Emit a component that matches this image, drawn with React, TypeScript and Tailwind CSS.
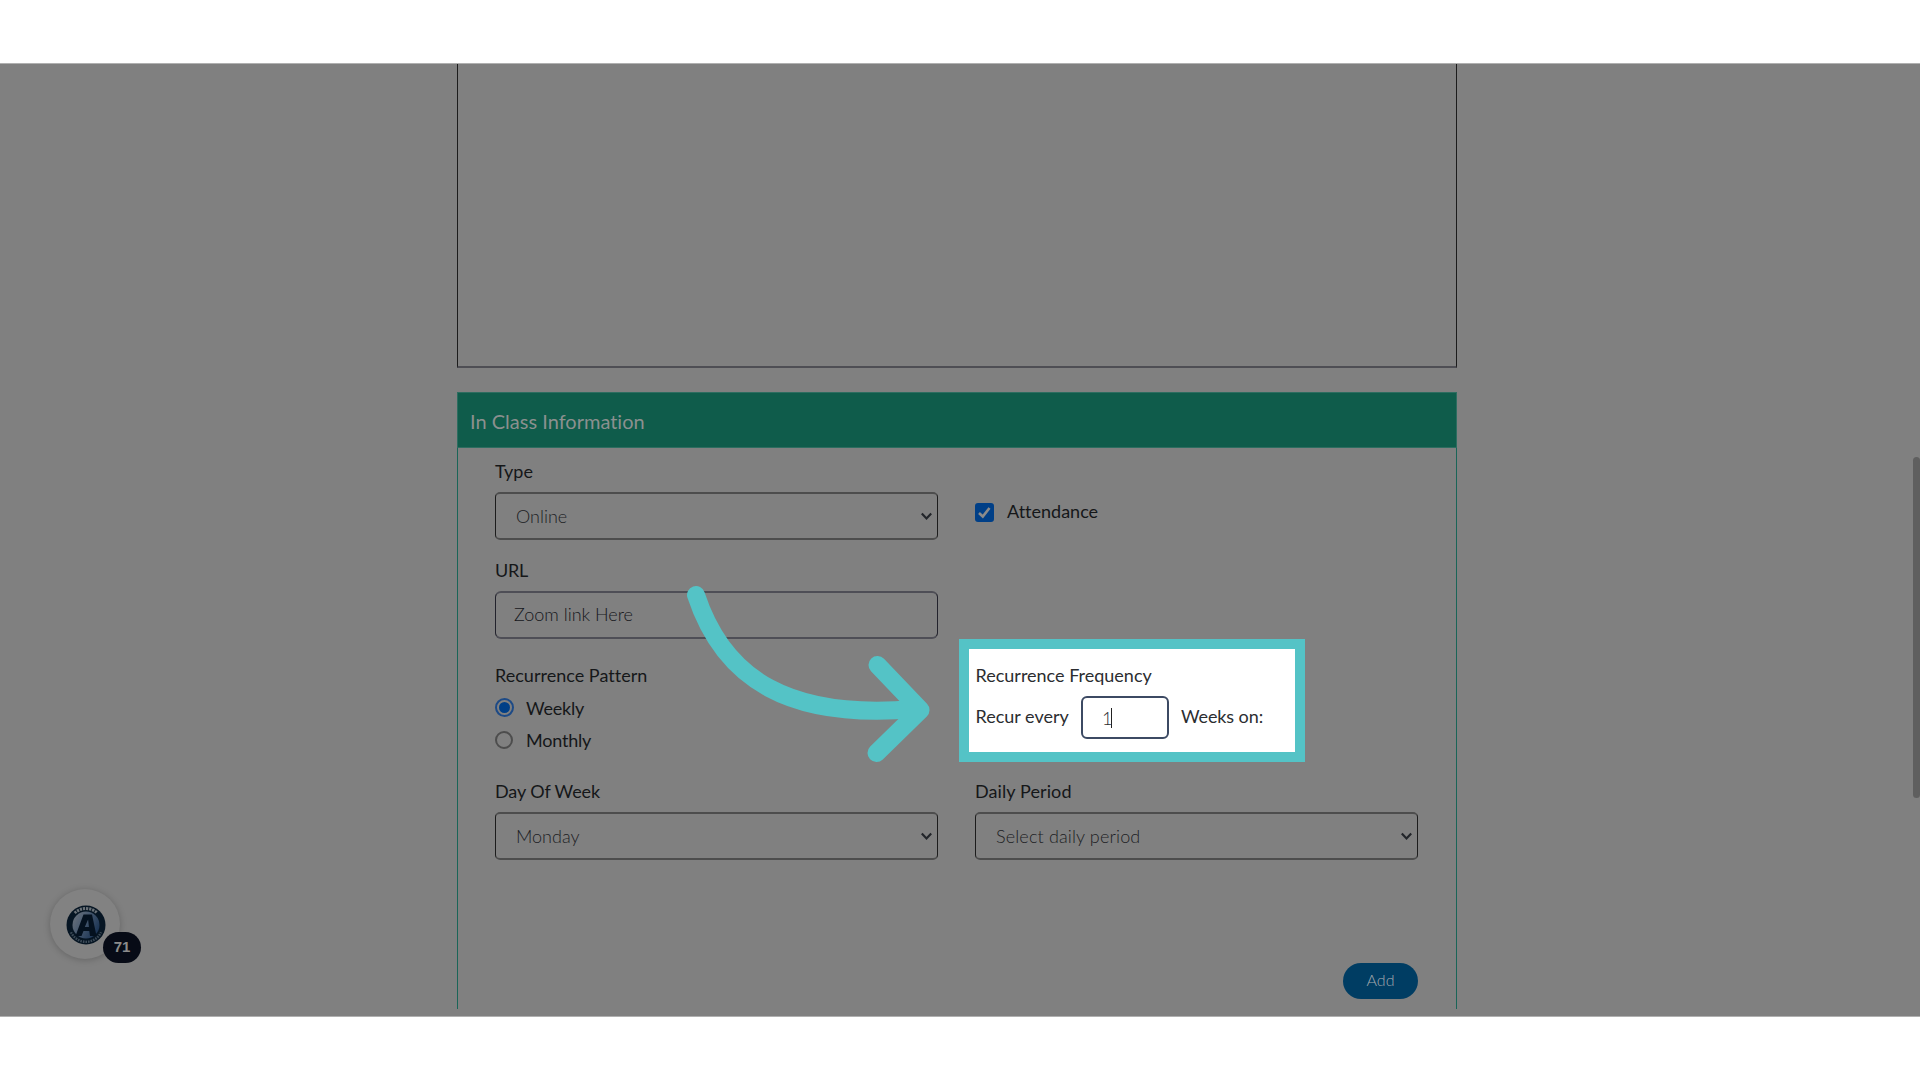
import React from 'react';

interface TextProps {
  children: React.ReactNode;
  className?: string;
}

const Label: React.FC<TextProps> = ({ children, className = '' }) => (
  <div className={`h-6 text-lg leading-6 whitespace-nowrap ${className}`}>{children}</div>
);

interface FieldProps {
  value: string;
  tracking?: string;
}

const SelectBox: React.FC<FieldProps> = ({ value, tracking = '' }) => (
  <div className="mt-[9px] flex h-12 w-[443px] items-center justify-between rounded-[5px] border-x border-y-2 border-x-[#1c1c1c] border-y-[#4d4d4d] pl-5 pr-1">
    <span className={`text-lg font-light leading-6 text-[#1d2024] whitespace-nowrap ${tracking}`}>{value}</span>
    <svg width="13" height="9" viewBox="0 0 13 9" fill="none" className="mt-px">
      <path d="M1.800 1.600 6.500 6.400 11.200 1.600" stroke="#22252a" strokeWidth="2.200" />
    </svg>
  </div>
);

const ChatWidget: React.FC = () => (
  <div className="absolute left-[50px] top-[825px] flex h-[70px] w-[70px] items-center justify-center rounded-full bg-[#828282] shadow-[0_1px_7px_rgba(0,0,0,0.22)]">
    <svg width="40" height="40" viewBox="0 0 40 40" className="mt-px ml-px">
      <defs>
        <linearGradient id="globe" x1="0" y1="0" x2="1" y2="0.6">
          <stop offset="0" stopColor="#6f757d" />
          <stop offset="0.45" stopColor="#4a5b70" />
          <stop offset="1" stopColor="#1c3555" />
        </linearGradient>
      </defs>
      <circle cx="20" cy="20" r="19.500" fill="#061523" />
      <circle cx="20" cy="20" r="13.500" fill="url(#globe)" />
      {/* Lettering band around the rim */}
      <path d="M8.700 8A16.500 16.500 0 0 1 31.300 8" stroke="#6a7177" strokeWidth="3" strokeDasharray="2.200 0.900" fill="none" />
      <path d="M5 27.200A16.500 16.500 0 0 0 35 27.200" stroke="#3c4a57" strokeWidth="2.400" strokeDasharray="1.600 1" fill="none" />
      <path d="M9.500 31 17.500 9.500h8.500L30.500 31h-6.500l-.7-5h-5.800l-2 5ZM18.800 22h4.200l-.9-7.500Z" fill="#04111f" />
    </svg>
    <div className="absolute left-[53px] top-[43px] flex h-[31px] w-[38px] items-center justify-center rounded-full bg-[#070b16] font-['Liberation_Sans'] text-[15px] font-bold text-[#8b8b8b]">
      71
    </div>
  </div>
);

const CurvedArrow: React.FC = () => (
  <svg className="absolute left-[670px] top-[506px]" width="280" height="210" viewBox="670 570 280 210" fill="none">
    <g stroke="#54c3c6" strokeWidth="18" strokeLinecap="round" strokeLinejoin="round">
      <path d="M696 595C724 680 790 720 915 709" />
      <path d="M877.500 665 920.500 710 876.500 753" />
    </g>
  </svg>
);

const App: React.FC = () => (
  <div className="h-[1080px] w-[1920px] overflow-hidden bg-white pt-[63px] font-[Lato,sans-serif] text-[#151719] [font-variant-ligatures:none]">
    <div className="relative h-[954px] overflow-hidden border-y border-[#b0b0b0] bg-[#808080]">
      <div className="ml-[457px] w-[1000px]">
        {/* Description editor, scrolled past its top */}
        <div className="h-[304px] border-x border-b-2 border-x-[#1c1c1c] border-b-[#4e4e54]"></div>

        {/* Class section */}
        <div className="mt-6 flex h-14 items-center border border-[#2d6d60] bg-[#0f5c4b] pl-3 pt-px text-xl text-[#8b908f]">
          <span>In Class Information</span>
        </div>
        <div className="h-[561px] border-x border-[#1a6558] pl-[37px] pt-[11px]">
          <div className="grid grid-cols-[443px_443px] gap-x-[37px]">
            <div>
              <Label>Type</Label>
              <SelectBox value="Online" />
            </div>
            <div className="flex items-start gap-[13px] pt-[40px]">
              <div className="mt-1 flex h-[19px] w-[19px] items-center justify-center rounded-[3px] bg-[#003f87]">
                <svg width="15" height="15" viewBox="0 0 15 15" fill="none">
                  <path d="M2 8 5.800 11.500 12.500 3" stroke="#8b8b8b" strokeWidth="2.600" />
                </svg>
              </div>
              <Label>Attendance</Label>
            </div>
          </div>

          <div className="mt-[18px]">
            <Label className="-tracking-[0.3px]">URL</Label>
            <div className="mt-[9px] flex h-12 w-[443px] items-center rounded-[6px] border-x border-y-2 border-x-[#22222c] border-y-[#4e4e56] pb-0.5 pl-[18px]">
              <span className="text-lg font-light leading-6 text-[#15171c]">Zoom link Here</span>
            </div>
          </div>

          <div className="mt-6 grid h-[89px] grid-cols-[443px_443px] gap-x-[37px]">
            <div>
              <Label className="tracking-[0.02px]">Recurrence Pattern</Label>
              <div className="mt-[9px] flex gap-3">
                <div className="mt-[2px] flex h-[19px] w-[19px] items-center justify-center rounded-full border-2 border-[#1d4a86]">
                  <div className="h-[11px] w-[11px] rounded-full bg-[#003f87]"></div>
                </div>
                <Label className="-tracking-[0.2px]">Weekly</Label>
              </div>
              <div className="mt-2 flex gap-[13px]">
                <div className="mt-[3px] h-[18px] w-[18px] rounded-full border-2 border-[#4d4d4d]"></div>
                <Label className="-tracking-[0.2px]">Monthly</Label>
              </div>
            </div>

            {/* Spotlighted step */}
            <div className="relative">
              <div className="absolute -left-4 -top-6 h-[123px] w-[346px] border-[10px] border-[#54c3c6] bg-white"></div>
              <div className="relative text-[#2b2d30]">
                <Label className="pl-[0.5px]">Recurrence Frequency</Label>
                <div className="mt-[9px] flex items-start">
                  <Label className="mt-[8px] w-[106px] pl-[0.5px]">Recur every</Label>
                  <div className="flex h-[43px] w-[88px] items-center rounded-[6px] border-2 border-[#3c4a63] pl-[19px]">
                    <span className="w-[9px] text-lg font-light leading-6">1</span>
                    <div className="h-5 w-px bg-[#222]"></div>
                  </div>
                  <Label className="ml-3 mt-[8px] -tracking-[0.1px]">Weeks on:</Label>
                </div>
              </div>
            </div>
          </div>

          <div className="mt-[27px] grid grid-cols-[443px_443px] gap-x-[37px]">
            <div>
              <Label className="-tracking-[0.1px]">Day Of Week</Label>
              <SelectBox value="Monday" />
            </div>
            <div>
              <Label className="tracking-[0.1px]">Daily Period</Label>
              <SelectBox value="Select daily period" tracking="tracking-[0.15px]" />
            </div>
          </div>

          <div className="mt-[103px] flex w-[923px] justify-end">
            <button className="h-9 w-[75px] rounded-full bg-[#003d63] pb-0.5 text-base font-light text-[#a4a9ad]">Add</button>
          </div>
        </div>
      </div>

      <div className="absolute right-0 top-[393px] h-[341px] w-[7px] rounded-full bg-[#5f5f5f]"></div>
      <ChatWidget />
      <CurvedArrow />
    </div>
  </div>
);

export default App;
